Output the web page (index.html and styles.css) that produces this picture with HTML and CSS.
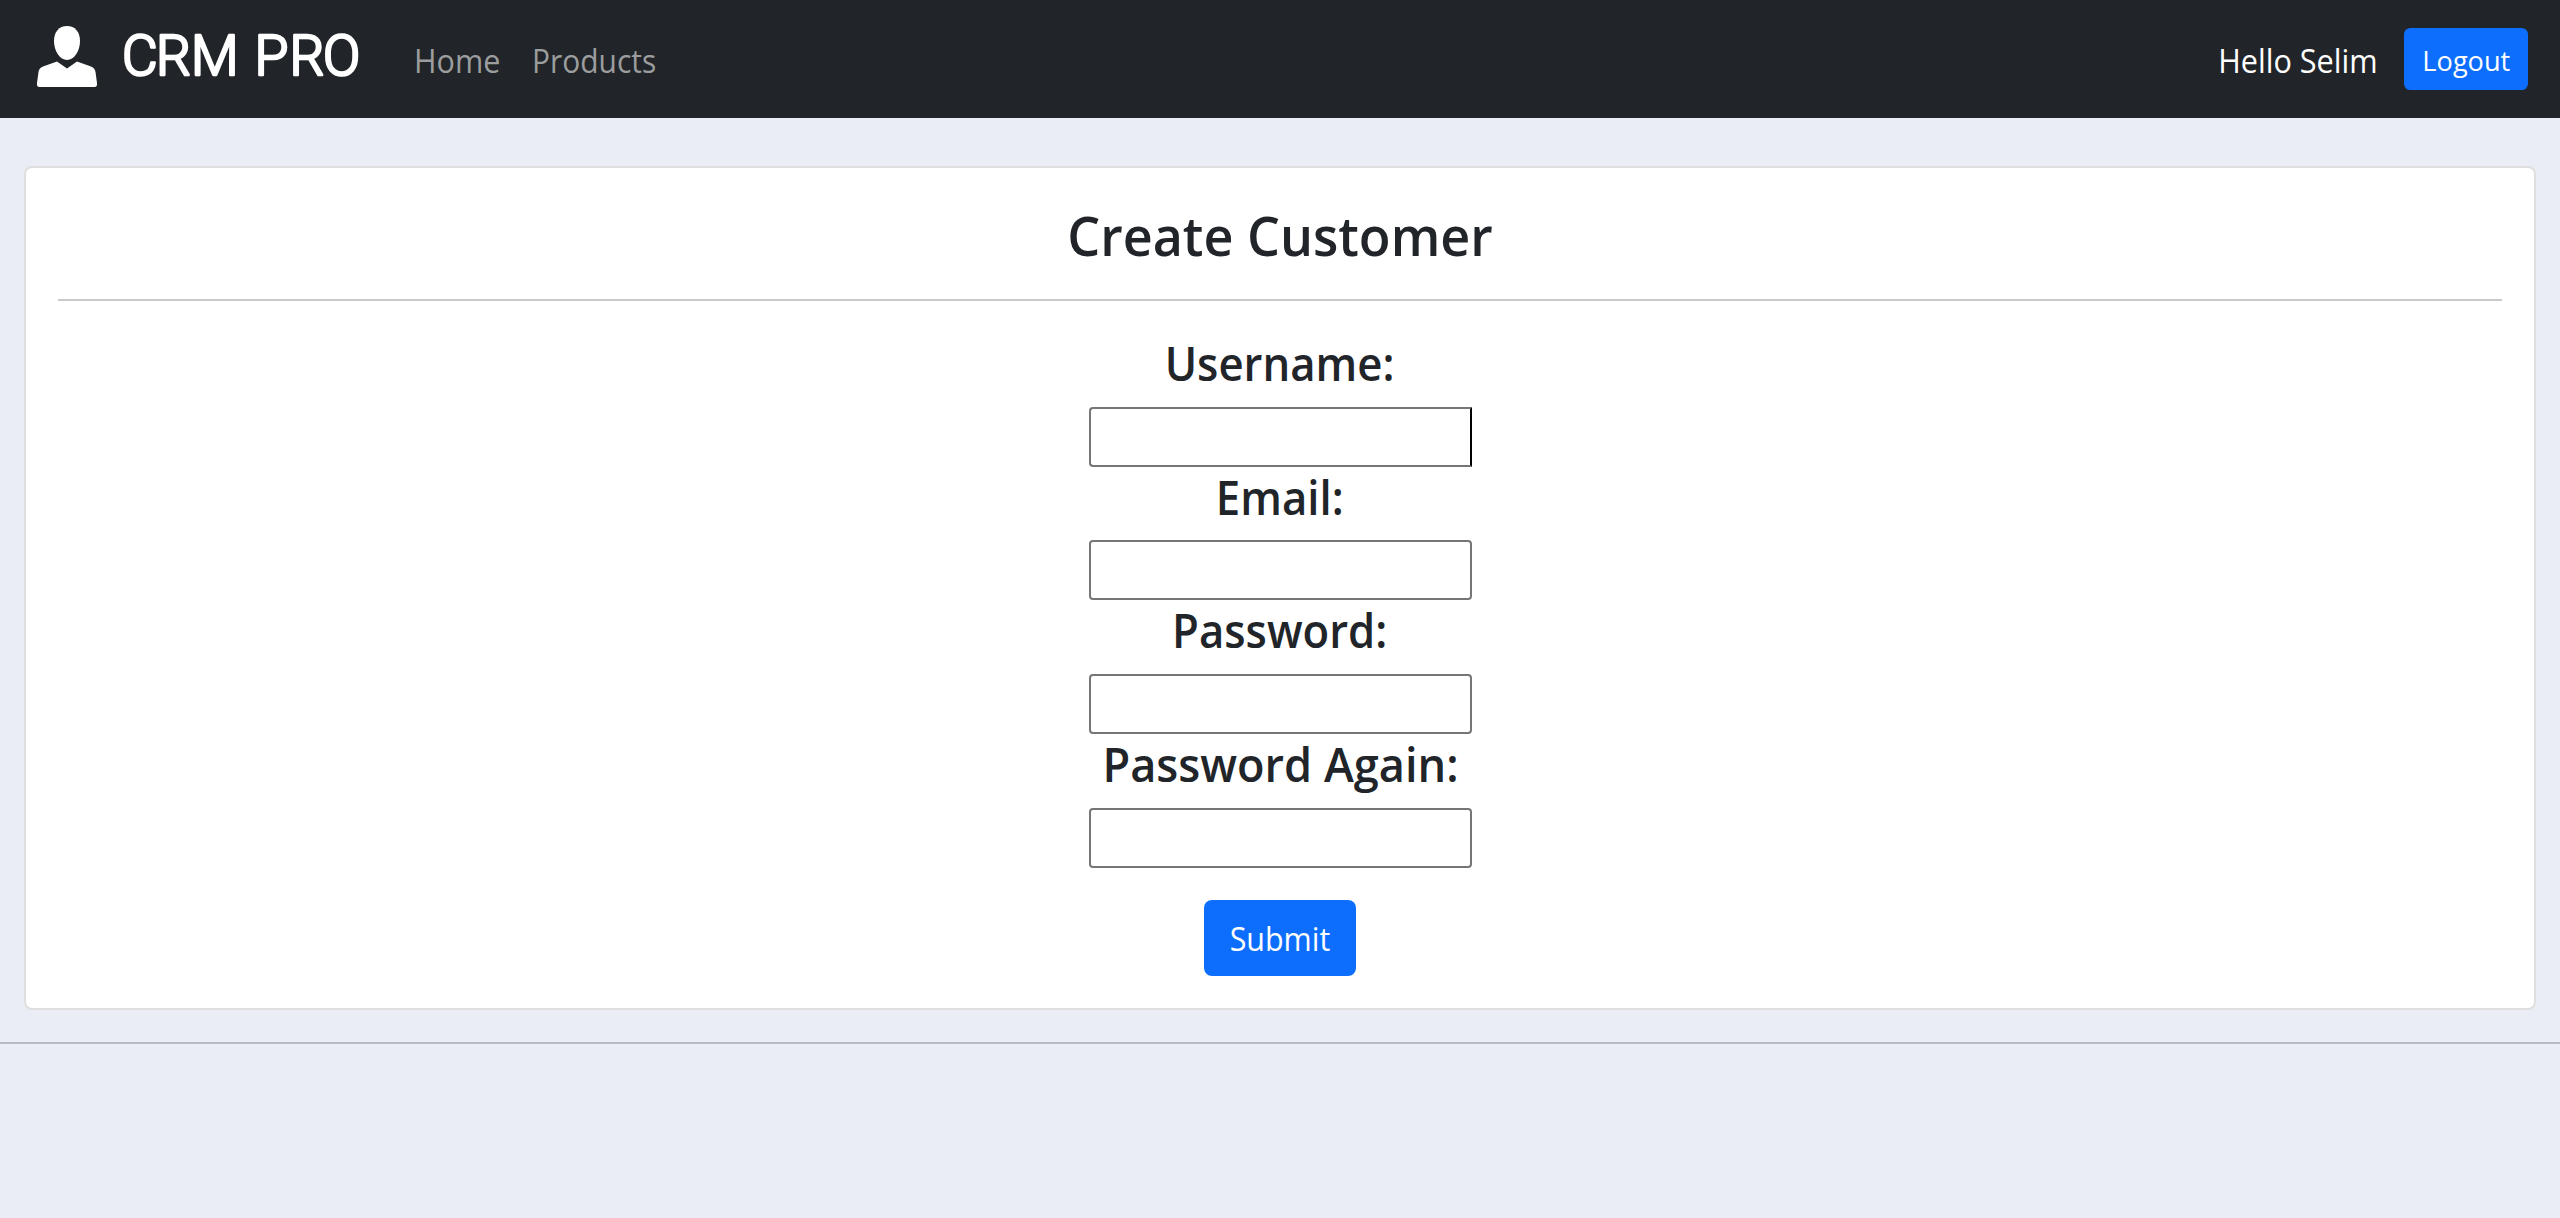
FILE: index.html
```html
<!DOCTYPE html>
<html lang="en">
<head>
<meta charset="utf-8">
<title>Create Customer</title>
<link rel="stylesheet" href="styles.css">
</head>
<body>
<nav class="navbar">
  <a class="brand" href="#">
    <svg class="brand-logo" width="340" height="78" viewBox="32 20 340 78" role="img" aria-label="CRM PRO">
      <path fill="#fff" d="M67 26c8 0 13 6 13 15 0 10-6 19-13 19s-13-9-13-19c0-9 5-15 13-15z"/>
      <path fill="#fff" d="M57 61.500l10 7 10-7 14 5c3 1.300 4 3 4.500 5.500l1.500 11c.3 2.500-.4 4-2.500 4h-55c-2 0-2.800-1.500-2.500-4l1.500-11c.5-2.500 1.500-4.200 4.500-5.500z"/>
      <text class="brand-text" y="75" x="122 156 191 240 254.500 289.500 323">CRM PRO</text>
    </svg>
  </a>
  <a class="nav-link home" href="#">Home</a>
  <a class="nav-link products" href="#">Products</a>
  <span class="hello">Hello Selim</span>
  <a class="btn btn-sm" href="#"><span class="logout-text">Logout</span></a>
</nav>
<main class="card">
  <h2 class="title">Create Customer</h2>
  <hr class="card-rule">
  <form class="form">
    <label class="label username" for="username">Username:</label>
    <input class="input clipped" id="username" type="text">
    <label class="label email" for="email">Email:</label>
    <input class="input" id="email" type="email">
    <label class="label password" for="password1">Password:</label>
    <input class="input" id="password1" type="password">
    <label class="label again" for="password2">Password Again:</label>
    <input class="input" id="password2" type="password">
    <button class="btn submit" type="button"><span class="submit-text">Submit</span></button>
  </form>
</main>
<hr class="page-rule">
</body>
</html>
```
FILE: styles.css
```css
* { box-sizing: border-box; }
body {
  margin: 0;
  min-height: 1218px;
  background: #eaedf5;
  color: #212529;
  font-family: "Open Sans", "Noto Sans", sans-serif;
  font-size: 32px;
  line-height: 48px;
}
a { text-decoration: none; }
.navbar {
  display: flex;
  align-items: center;
  height: 118px;
  padding: 0 32px;
  background: #212529;
}
.brand { display: block; height: 78px; }
.brand-logo { display: block; }
.brand-text {
  fill: #fff;
  stroke: #fff;
  stroke-width: 2.6px;
  stroke-linejoin: round;
  font-family: Roboto, sans-serif;
  font-weight: 300;
  font-size: 55px;
}
.nav-link, .hello { padding-top: 3px; white-space: nowrap; }
.nav-link { color: #9b9d9e; transform-origin: left; }
.home { width: 85px; margin-left: 42px; transform: scaleX(.955); }
.products { margin-left: 33px; transform: scaleX(.935); }
.hello { margin-left: auto; margin-right: 26px; color: #fff; transform: scaleX(.957); transform-origin: right; }
.btn {
  display: flex;
  align-items: center;
  justify-content: center;
  border: 0;
  background: #0d6efd;
  color: #fff;
  font-family: inherit;
  white-space: nowrap;
}
.btn-sm { width: 124px; height: 62px; border-radius: 6.4px; font-size: 28px; line-height: 42px; }
.logout-text { padding-top: 1px; transform: scaleX(.97); }
.submit-text { padding-top: 1px; transform: scaleX(.95); }
.card {
  height: 844px;
  margin: 48px 24px 0;
  padding: 32px;
  border: 2px solid #dfdfdf;
  border-radius: 8px;
  background: #fff;
}
.title {
  height: 67px;
  margin: 0;
  font-size: 55px;
  font-weight: 600;
  line-height: 70px;
  text-align: center;
  transform: scaleX(.946);
}
.card-rule { height: 2px; margin: 32px 0; border: 0; background: #c8c9ca; }
.form { display: flex; flex-direction: column; align-items: center; }
.label {
  height: 58px;
  margin-bottom: 16px;
  font-size: 47px;
  font-weight: 600;
  line-height: 60px;
  white-space: nowrap;
  transform: scaleX(.93);
}
.email { height: 57px; }
.again { transform: scaleX(.96); }
.input {
  width: 383px;
  height: 60px;
  margin: 0;
  padding: 2px 4px;
  border: 2px solid #767676;
  border-radius: 4px;
  outline: 0;
  background: #fff;
  font: inherit;
}
.clipped { border-right-color: #000; border-top-right-radius: 0; border-bottom-right-radius: 0; }
.submit { width: 152px; height: 76px; margin-top: 32px; border-radius: 8px; font-size: 32px; }
.page-rule { height: 2px; margin: 32px 0 0; border: 0; background: #b8bbc2; }
```
